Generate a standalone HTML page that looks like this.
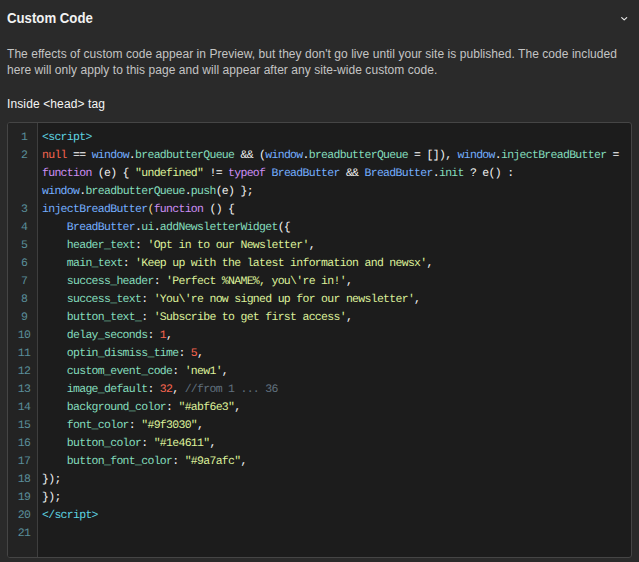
<!DOCTYPE html>
<html><head><meta charset="utf-8">
<style>
html,body{margin:0;padding:0;}
body{width:639px;height:562px;background:#2a2a2a;position:relative;overflow:hidden;font-family:"Liberation Sans",sans-serif;}
.title{position:absolute;left:7px;top:8px;font-size:15px;transform-origin:0 0;transform:scaleX(0.88);font-weight:bold;color:#f2f2f2;line-height:20px;white-space:nowrap;}
.chev{position:absolute;left:620px;top:15px;}
.desc{position:absolute;left:7px;top:46px;font-size:12px;letter-spacing:0.05px;line-height:16px;color:#c4c4c4;white-space:nowrap;}
.label{position:absolute;left:7px;top:96px;font-size:12px;letter-spacing:0.12px;line-height:16px;color:#f5f5f5;white-space:nowrap;}
.box{position:absolute;left:7px;top:122px;width:623px;height:434px;border:1px solid #454545;border-radius:3px;background:#1c1c1c;overflow:hidden;}
.gutter{position:absolute;left:0;top:0;width:29px;height:434px;background:#232323;border-right:1px solid #3e3e3e;}
.ln{position:absolute;left:0;width:32px;text-align:center;font-family:"Liberation Mono",monospace;font-size:11.5px;letter-spacing:-0.7px;text-rendering:geometricPrecision;line-height:18px;color:#5a8e9a;}
.code{position:absolute;left:34px;top:6px;font-family:"Liberation Mono",monospace;font-size:11.5px;letter-spacing:-0.7px;text-rendering:geometricPrecision;line-height:18px;color:#f4f4f4;white-space:pre;}
.t{color:#5ed4e2}
.r{color:#f6644f}
.b{color:#74aeff}
.g{color:#84dcbc}
.p{color:#cc8ef4}
.y{color:#dcf09a}
.s{color:#dcf09a}
.o{color:#f0d890}
.c{color:#60707e}
</style></head><body>
<div class="title">Custom Code</div>
<svg class="chev" width="10" height="8" viewBox="0 0 10 8"><path d="M1.7 2.6 L4.2 4.9 L6.7 2.6" fill="none" stroke="#e8e8e8" stroke-width="1.2" stroke-linecap="round" stroke-linejoin="round"/></svg>
<div class="desc">The effects of custom code appear in Preview, but they don't go live until your site is published. The code included<br>here will only apply to this page and will appear after any site-wide custom code.</div>
<div class="label">Inside &lt;head&gt; tag</div>
<div class="box">
<div class="gutter"></div>
<div class="ln" style="top:6px">1</div>
<div class="ln" style="top:24px">2</div>
<div class="ln" style="top:78px">3</div>
<div class="ln" style="top:96px">4</div>
<div class="ln" style="top:114px">5</div>
<div class="ln" style="top:132px">6</div>
<div class="ln" style="top:150px">7</div>
<div class="ln" style="top:168px">8</div>
<div class="ln" style="top:186px">9</div>
<div class="ln" style="top:204px">10</div>
<div class="ln" style="top:222px">11</div>
<div class="ln" style="top:240px">12</div>
<div class="ln" style="top:258px">13</div>
<div class="ln" style="top:276px">14</div>
<div class="ln" style="top:294px">15</div>
<div class="ln" style="top:312px">16</div>
<div class="ln" style="top:330px">17</div>
<div class="ln" style="top:348px">18</div>
<div class="ln" style="top:366px">19</div>
<div class="ln" style="top:384px">20</div>
<div class="ln" style="top:402px">21</div>
<div class="code"><span class="t">&lt;script&gt;</span>
<span class="r">null</span> == <span class="b">window</span>.<span class="g">breadbutterQueue</span> &amp;&amp; (<span class="b">window</span>.<span class="g">breadbutterQueue</span> = []), <span class="b">window</span>.<span class="g">injectBreadButter</span> =
<span class="p">function</span> (e) { <span class="y">"undefined"</span> != <span class="p">typeof</span> <span class="b">BreadButter</span> &amp;&amp; <span class="b">BreadButter</span>.<span class="g">init</span> ? e() :
<span class="b">window</span>.<span class="g">breadbutterQueue</span>.<span class="g">push</span>(e) };
<span class="b">injectBreadButter</span><span class="o">(</span><span class="p">function</span> () {
    <span class="b">BreadButter</span>.<span class="g">ui</span>.<span class="g">addNewsletterWidget</span>({
    <span class="g">header_text</span>: <span class="s">'Opt in to our Newsletter'</span>,
    <span class="g">main_text</span>: <span class="s">'Keep up with the latest information and newsx'</span>,
    <span class="g">success_header</span>: <span class="s">'Perfect %NAME%, you\'re in!'</span>,
    <span class="g">success_text</span>: <span class="s">'You\'re now signed up for our newsletter'</span>,
    <span class="g">button_text_</span>: <span class="s">'Subscribe to get first access'</span>,
    <span class="g">delay_seconds</span>: <span class="r">1</span>,
    <span class="g">optin_dismiss_time</span>: <span class="r">5</span>,
    <span class="g">custom_event_code</span>: <span class="s">'new1'</span>,
    <span class="g">image_default</span>: <span class="r">32</span>, <span class="c">//from 1 ... 36</span>
    <span class="g">background_color</span>: <span class="y">"#abf6e3"</span>,
    <span class="g">font_color</span>: <span class="y">"#9f3030"</span>,
    <span class="g">button_color</span>: <span class="y">"#1e4611"</span>,
    <span class="g">button_font_color</span>: <span class="y">"#9a7afc"</span>,
});
});
<span class="t">&lt;/script&gt;</span>
</div>
</div>
</body></html>
